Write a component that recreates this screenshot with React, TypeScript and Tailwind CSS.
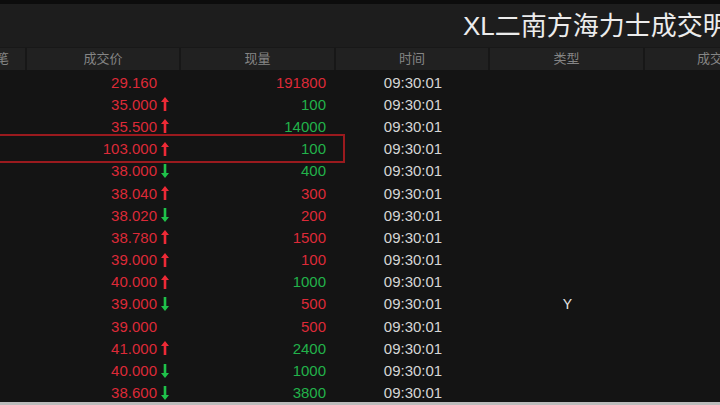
import React from 'react';

type Trade = {
  price: string;
  dir: 'up' | 'down' | null;
  qty: string;
  qtyUp: boolean;
  type?: string;
  marked?: boolean;
};

const TRADES: Trade[] = [
  { price: '29.160', dir: null, qty: '191800', qtyUp: true },
  { price: '35.000', dir: 'up', qty: '100', qtyUp: false },
  { price: '35.500', dir: 'up', qty: '14000', qtyUp: false },
  { price: '103.000', dir: 'up', qty: '100', qtyUp: false, marked: true },
  { price: '38.000', dir: 'down', qty: '400', qtyUp: false },
  { price: '38.040', dir: 'up', qty: '300', qtyUp: true },
  { price: '38.020', dir: 'down', qty: '200', qtyUp: true },
  { price: '38.780', dir: 'up', qty: '1500', qtyUp: true },
  { price: '39.000', dir: 'up', qty: '100', qtyUp: true },
  { price: '40.000', dir: 'up', qty: '1000', qtyUp: false },
  { price: '39.000', dir: 'down', qty: '500', qtyUp: true, type: 'Y' },
  { price: '39.000', dir: null, qty: '500', qtyUp: true },
  { price: '41.000', dir: 'up', qty: '2400', qtyUp: false },
  { price: '40.000', dir: 'down', qty: '1000', qtyUp: false },
  { price: '38.600', dir: 'down', qty: '3800', qtyUp: false },
];

const FONT = { fontFamily: '"Liberation Sans", "Noto Sans CJK SC", sans-serif' };

function Arrow({ dir }: { dir: 'up' | 'down' }) {
  const color = dir === 'up' ? '#ee2a36' : '#1fc24a';
  return (
    <svg width="8" height="14" viewBox="0 0 8 14" className={dir === 'down' ? 'rotate-180' : ''}>
      <path d="M4 0 L8 5 L5.3 5 L5.3 14 L2.7 14 L2.7 5 L0 5 Z" fill={color} />
    </svg>
  );
}

export default function App() {
  return (
    <div className="w-[720px] h-[405px] flex flex-col overflow-hidden bg-[#141414]" style={FONT}>
      <div className="h-[4px] shrink-0 bg-[#0c0c0c]" />

      {/* title bar */}
      <div className="h-[43px] shrink-0 bg-[#1d1d1d] flex items-center overflow-hidden">
        <div className="pl-[463px] shrink-0 whitespace-nowrap text-[26px] text-[#ececec] leading-none">
          XL二南方海力士成交明细
        </div>
      </div>

      {/* column headers */}
      <div className="h-[23px] shrink-0 bg-[#212121] flex text-[13px] text-[#858585] border-t border-[#181818] whitespace-nowrap overflow-hidden">
        <div className="w-[27px] shrink-0 flex items-center justify-end overflow-hidden border-r-2 border-[#171717]">
          <span className="mr-[16px]">笔</span>
        </div>
        <div className="w-[154px] shrink-0 flex items-center justify-center border-r-2 border-[#171717]">成交价</div>
        <div className="w-[155px] shrink-0 flex items-center justify-center border-r-2 border-[#171717]">现量</div>
        <div className="w-[154px] shrink-0 flex items-center justify-center border-r-2 border-[#171717]">时间</div>
        <div className="w-[155px] shrink-0 flex items-center justify-center border-r-2 border-[#171717]">类型</div>
        <div className="w-[155px] shrink-0 flex items-center pl-[52px]">成交</div>
      </div>

      {/* rows */}
      <div className="flex-1 overflow-hidden pt-[1px]">
        {TRADES.map((t, i) => (
          <div key={i} className="relative h-[22.2px] flex text-[15px] leading-none whitespace-nowrap">
            {t.marked && (
              <span className="absolute left-[-4px] top-[-4px] bottom-[-3px] w-[349px] border-2 border-[#9a1a1e]" />
            )}
            <div className="w-[27px] shrink-0" />
            <div className="w-[154px] shrink-0 flex items-center justify-end pr-[12px] text-[#dd2a38]">
              <span>{t.price}</span>
              <span className="w-[12px] flex justify-end">{t.dir && <Arrow dir={t.dir} />}</span>
            </div>
            <div
              className={`w-[155px] shrink-0 flex items-center justify-end pr-[10px] ${t.qtyUp ? 'text-[#dd2a38]' : 'text-[#22b24a]'}`}
            >
              {t.qty}
            </div>
            <div className="w-[154px] shrink-0 flex items-center justify-center text-[#d6d6d6]">09:30:01</div>
            <div className="w-[155px] shrink-0 flex items-center justify-center text-[#e6e6e6] text-[14px]">{t.type}</div>
          </div>
        ))}
      </div>

      <div className="h-[3px] shrink-0 bg-[#bcbcbc]" />
    </div>
  );
}
